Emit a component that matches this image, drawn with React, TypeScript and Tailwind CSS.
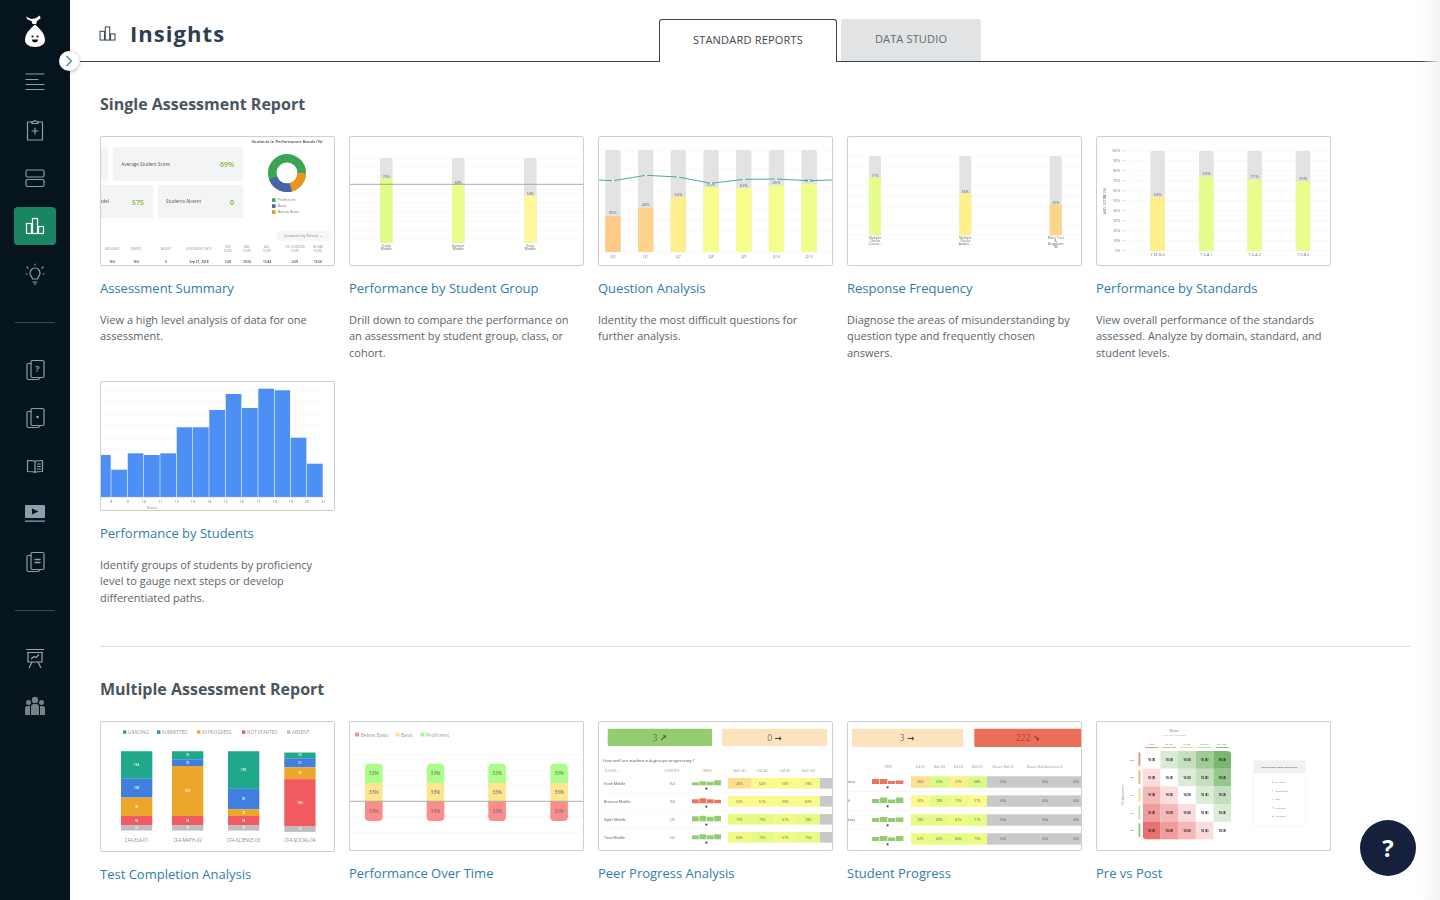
import React from "react";

type P = { children?: React.ReactNode };
const ICON = "#8aa0ae";

function Svg({ children }: P) {
  return (
    <svg viewBox="1 1 233 128" preserveAspectRatio="none" className="block w-full h-full blur-[0.45px]">
      {children}
    </svg>
  );
}

function Grid({ ys, x1 = 1, x2 = 234 }: { ys: number[]; x1?: number; x2?: number }) {
  return (
    <>
      {ys.map((y) => (
        <line key={y} x1={x1} x2={x2} y1={y} y2={y} stroke="#f1f1f1" strokeWidth="0.6" />
      ))}
    </>
  );
}

const T = ({ x, y, s = 4, c = "#666", a = "middle", w = 400, children }: { x: number; y: number; s?: number; c?: string; a?: "start" | "middle" | "end"; w?: number; children: React.ReactNode }) => (
  <text x={x} y={y} fontSize={s} fill={c} textAnchor={a} fontWeight={w}>
    {children}
  </text>
);

const Arrow = ({ c, children }: { c: string; children: React.ReactNode }) => (
  <tspan fontFamily="'DejaVu Sans',sans-serif" fontWeight={700} fill={c}>
    {children}
  </tspan>
);

function Summary() {
  const cols: [number, string[], string][] = [
    [12, ["#ASSIGNED"], "160"], [36, ["GRADED"], "160"], [66, ["ABSENT"], "0"], [99, ["ASSESSMENT DATE"], "Sep 21, 2018"],
    [128, ["MIN.", "SCORE"], "2.00"], [147, ["MAX.", "SCORE"], "20.00"], [167, ["AVG.", "SCORE"], "13.84"], [195, ["STD. DEVIATION", "SCORE"], "4.09"], [218, ["MEDIAN", "SCORE"], "16.00"],
  ];
  const ring = (c: string, start: number, end: number) => (
    <circle cx="187" cy="37" r="14.75" fill="none" stroke={c} strokeWidth="8.5" pathLength="360" strokeDasharray={`${end - start} 360`} strokeDashoffset={-start} transform="rotate(-90 187 37)" />
  );
  return (
    <Svg>
      <rect x="-5" y="11" width="13" height="34" rx="2" fill="#f3f4f6" />
      <rect x="13" y="11" width="130" height="34" rx="2" fill="#f3f4f6" />
      <T x={21.5} y={29.5} s={4.6} a="start" c="#555">Average Student Score</T>
      <T x={134} y={31} s={7} a="end" c="#7cb82f" w={600}>69%</T>
      <rect x="-5" y="49" width="58" height="33" rx="2" fill="#f3f4f6" />
      <T x={0} y={67} s={4.6} a="start" c="#555">adel</T>
      <T x={44} y={68.5} s={7} a="end" c="#7cb82f" w={600}>575</T>
      <rect x="58" y="49" width="85" height="33" rx="2" fill="#f3f4f6" />
      <T x={66} y={67} s={4.6} a="start" c="#555">Students Absent</T>
      <T x={134} y={68.5} s={7} a="end" c="#7cb82f" w={600}>0</T>
      <T x={187} y={7} s={4.2} c="#444" w={600}>Students in Performance Bands (%)</T>
      <circle cx="187" cy="37" r="14.75" fill="none" stroke="#3aa655" strokeWidth="8.5" />
      {ring("#f0931e", 90, 165)}
      {ring("#4a62a8", 165, 250)}
      {[["#3aa655", "Proficient", 64], ["#4a62a8", "Basic", 70], ["#f0931e", "Below Basic", 76]].map(([c, t, y]) => (
        <g key={t as string}>
          <rect x="172" y={(y as number) - 1.7} width="3.6" height="3.6" fill={c as string} />
          <T x={177.5} y={(y as number) + 1.4} s={4} a="start" c="#777">{t}</T>
        </g>
      ))}
      <rect x="177" y="95" width="53" height="10" rx="1" fill="#f5f6f7" />
      <T x={203} y={101.4} s={3.8} c="#888">Compare by School ⌄</T>
      {cols.map(([x, h, v]) => (
        <g key={x}>
          {h.length === 1 ? (
            <T x={x} y={114} s={2.8} c="#999">{h[0]}</T>
          ) : (
            <>
              <T x={x} y={112} s={2.6} c="#999">{h[0]}</T>
              <T x={x} y={116} s={2.6} c="#999">{h[1]}</T>
            </>
          )}
          <T x={x} y={127} s={3.2} c="#444" w={600}>{v}</T>
        </g>
      ))}
    </Svg>
  );
}

const grid10 = [22, 31, 40, 49, 58, 67, 76, 85, 94, 103];

function Group() {
  const bars: [number, number, string, string, string[]][] = [
    [31, 42.3, "#e2fc8a", "75%", ["Trunk", "Middle"]],
    [103, 49, "#e9fc8c", "68%", ["Sumner", "Middle"]],
    [175, 59.7, "#fdf69a", "54%", ["Zinck", "Middle"]],
  ];
  return (
    <Svg>
      <Grid ys={grid10} />
      {bars.map(([x, top, c, l, n]) => (
        <g key={x}>
          <rect x={x} y="22" width="12.5" height="85" rx="1.5" fill="#e3e3e3" />
          <rect x={x} y={top} width="12.5" height={106.7 - top} fill={c} />
          <T x={x + 6.25} y={top - 0.8} s={3.6} c="#666">{l}</T>
          <T x={x + 6.25} y={111} s={3.4}>{n[0]}</T>
          <T x={x + 6.25} y={114} s={3.4}>{n[1]}</T>
        </g>
      ))}
      <line x1="1" x2="234" y1="48.3" y2="48.3" stroke="#8a8a8a" strokeWidth="0.7" />
    </Svg>
  );
}

function Question() {
  const bars: [number, string, string, string][] = [
    [80, "#fdcb87", "35%", "Q3"], [71.7, "#fed48b", "44%", "Q1"], [61.3, "#fdf08c", "54%", "Q7"], [51.3, "#f8fd8c", "63%", "Q8"],
    [52.3, "#f8fd8c", "63%", "Q9"], [49.7, "#f3fe8c", "65%", "Q14"], [48, "#f0fe8c", "66%", "Q15"],
  ];
  const line: [number, number][] = [[1, 44], [15, 44.7], [48, 39.3], [80, 41], [113, 47.3], [146, 43.3], [178, 43], [211, 44.7], [234, 44]];
  return (
    <Svg>
      <Grid ys={[14, 24, 34, 44, 54, 64, 74, 84, 94, 104, 116]} />
      {bars.map(([top, c, l, n], i) => {
        const x = 7.3 + i * 32.7;
        return (
          <g key={n}>
            <rect x={x} y="14" width="15.4" height="102" rx="1.5" fill="#e3e3e3" />
            <rect x={x} y={top} width="15.4" height={116 - top} fill={c} />
            <T x={x + 7.7} y={top - 1.6} s={4} c="#666">{l}</T>
            <T x={x + 7.7} y={122} s={3.8} c="#777">{n}</T>
          </g>
        );
      })}
      <polyline points={line.map((p) => p.join(",")).join(" ")} fill="none" stroke="#2fa890" strokeWidth="0.9" />
      {line.slice(1, -1).map(([x, y]) => (
        <circle key={x} cx={x} cy={y} r="1.1" fill="#fff" />
      ))}
    </Svg>
  );
}

function Response() {
  const bars: [number, number, string, string, string[]][] = [
    [22, 41.7, "#e6fd8c", "71%", ["Multiple", "Choice", "Concre..."]],
    [112.3, 57.3, "#fdf08a", "55%", ["Multiple", "Choice", "Analysi..."]],
    [202.7, 68.7, "#fdd58a", "35%", ["Mem, Tool", "&", "Brogdown", "(B)"]],
  ];
  return (
    <Svg>
      <Grid ys={[20, 30, 40, 50, 60, 70, 80, 90, 99]} />
      {bars.map(([x, top, c, l, n]) => (
        <g key={x}>
          <rect x={x} y="20" width="12" height="79.3" rx="1.5" fill="#e3e3e3" />
          <rect x={x} y={top} width="12" height={99.3 - top} fill={c} />
          <T x={x + 6} y={top - 0.8} s={3.6} c="#666">{l}</T>
          {n.map((t, i) => (
            <T key={t} x={x + 6} y={103 + i * 3} s={3.2}>{t}</T>
          ))}
        </g>
      ))}
    </Svg>
  );
}

function Standards() {
  const bars: [number, number, string, string, string][] = [
    [54.3, 61.3, "#fdf08a", "54%", "7.EE.B.4"], [103, 40.7, "#e6fd8c", "74%", "7.G.A.1"],
    [151.3, 44, "#e8fd8c", "71%", "7.G.A.2"], [199.7, 45.7, "#eafe8c", "70%", "7.G.B.4"],
  ];
  return (
    <Svg>
      <Grid ys={Array.from({ length: 11 }, (_, i) => 14.7 + i * 10)} x1={34} />
      {Array.from({ length: 11 }, (_, i) => (
        <g key={i}>
          <T x={24} y={16 + i * 10} s={3.4} a="end" c="#777">{100 - i * 10}%</T>
          <line x1="26.5" x2="29.5" y1={14.7 + i * 10} y2={14.7 + i * 10} stroke="#999" strokeWidth="0.4" />
        </g>
      ))}
      <text x="10" y="65" fontSize="3.6" fill="#666" textAnchor="middle" transform="rotate(-90 10 65)">AVG. SCORE (%)</text>
      {bars.map(([x, top, c, l, n]) => (
        <g key={n}>
          <rect x={x} y="15" width="14.6" height="99.7" rx="1.5" fill="#e3e3e3" />
          <rect x={x} y={top} width="14.6" height={114.7 - top} fill={c} />
          <T x={x + 7.3} y={top - 1.6} s={4.2} c="#666">{l}</T>
          <T x={x + 7.3} y={120} s={3.8} c="#777">{n}</T>
        </g>
      ))}
    </Svg>
  );
}

function Students() {
  const edges = [1, 11.3, 27.7, 44, 60.3, 76.7, 93, 109.3, 125.7, 142, 158.3, 174.7, 190.7, 207, 223.3];
  const tops = [74, 88.7, 72.3, 74, 72.3, 46.3, 46.3, 29, 13, 27, 7.7, 9.3, 56.7, 82.7];
  return (
    <Svg>
      <Grid ys={[9, 21, 33, 45, 57, 69, 81, 93, 105]} x2={224} />
      {tops.map((t, i) => (
        <rect key={i} x={edges[i]} y={t} width={edges[i + 1] - edges[i] - 0.6} height={116 - t} fill="#4d8ff5" />
      ))}
      <line x1="1" x2="224" y1="116" y2="116" stroke="#aaa" strokeWidth="0.5" />
      {edges.slice(1).map((x, i) => (
        <T key={x} x={x} y={122} s={3.8} c="#777">{i + 8}</T>
      ))}
      <T x={52} y={127.5} s={4} c="#777">Score</T>
    </Svg>
  );
}

function Completion() {
  const colors = ["#1fa98a", "#3f7fe0", "#eca72a", "#f05a60", "#bdbdbd"];
  const legend: [number, string][] = [[23, "GRADING"], [57, "SUBMITTED"], [97, "IN PROGRESS"], [142, "NOT STARTED"], [187, "ABSENT"]];
  const bars: [number, number[], string[], string][] = [
    [21, [30, 57.3, 76, 94.3, 103.3, 108.7], ["154", "108", "90", "58", "16"], "CFA-ELA-01"],
    [72, [30, 38, 44.7, 94.3, 103.3, 108.7], ["25", "70", "318", "58", "16"], "CFA-MATH-02"],
    [128, [30, 67.3, 87.7, 94.3, 103.3, 108.7], ["190", "90", "18", "58", "16"], "CFA-SCIENCE-03"],
    [184.3, [31.3, 37, 46, 57.7, 104.7, 110], ["20", "51", "35", "180", "13"], "CFA-SOCIAL-04"],
  ];
  return (
    <Svg>
      {legend.map(([x, t], i) => (
        <g key={t}>
          <rect x={x} y="9.3" width="3.4" height="3.4" fill={colors[i]} />
          <T x={x + 5} y={12.7} s={4.7} a="start" c="#999">{t}</T>
        </g>
      ))}
      {bars.map(([x, ys, vals, n]) => (
        <g key={n}>
          {vals.map((v, i) => (
            <g key={i}>
              <rect x={x} y={ys[i]} width="31.3" height={ys[i + 1] - ys[i]} fill={colors[i]} />
              <T x={x + 15.6} y={(ys[i] + ys[i + 1]) / 2 + 1} s={3} c="#fff" w={600}>{v}</T>
            </g>
          ))}
          <T x={x + 15.6} y={120.3} s={4.5} c="#888">{n}</T>
        </g>
      ))}
    </Svg>
  );
}

function OverTime() {
  return (
    <Svg>
      <Grid ys={[34, 49.3, 64.7, 95.7, 111.3]} />
      {[[6, "#fc8d8d", "Below Basic"], [46.5, "#fde68f", "Basic"], [71.5, "#acfd8a", "Proficient"]].map(([x, c, t]) => (
        <g key={t as string}>
          <rect x={x as number} y="11.5" width="4" height="4" rx="0.5" fill={c as string} />
          <T x={(x as number) + 5.5} y={15.5} s={5.2} a="start" c="#999">{t}</T>
        </g>
      ))}
      {[16, 77.7, 139.3, 201.3].map((x) => (
        <g key={x}>
          <rect x={x} y="42.7" width="17.6" height="25" rx="4" fill="#acfd8a" />
          <rect x={x} y="92" width="17.6" height="8" rx="4" fill="#fc8d8d" />
          <rect x={x} y="62" width="17.6" height="19" fill="#fde68f" />
          <rect x={x} y="81" width="17.6" height="15" fill="#fc8d8d" />
          {[53.5, 72.8, 92].map((y) => (
            <T key={y} x={x + 8.8} y={y} s={5} c="#666">33%</T>
          ))}
        </g>
      ))}
      <line x1="1" x2="234" y1="80.3" y2="80.3" stroke="#8a8a8a" strokeWidth="0.7" />
    </Svg>
  );
}

const GR = "#96cc70";
const RD = "#ea7560";
function Trend({ x, y, c, hs, w }: { x: number; y: number; c: string; hs: number[]; w: number }) {
  return (
    <>
      {hs.map((h, i) => (
        <rect key={i} x={x + i * (w + 0.6)} y={y - h} width={w} height={h} fill={c} />
      ))}
      <rect x={x + 2 * (w + 0.6) - 1.3} y={y + 2.4} width="1.8" height="1.8" fill="#333" />
    </>
  );
}

function Peer() {
  const rows: [string, string, string, number[], string[], string[]][] = [
    ["Erath Middle", "164", GR, [3, 4, 3.5, 5], ["#fde08d", "#f9f98c", "#fbfb8c", "#f9f98c"], ["45%", "64%", "56%", "59%"]],
    ["Branson Middle", "160", RD, [4, 5, 4, 3.5], ["#fbf98c", "#f9f98c", "#f9f98c", "#f9f98c"], ["52%", "61%", "56%", "60%"]],
    ["Sigler Middle", "120", GR, [5, 5.5, 4.5, 5.5], ["#e6fb85", "#e6fb85", "#f0fb85", "#e6fb85"], ["75%", "73%", "67%", "78%"]],
    ["Tevis Middle", "142", GR, [4, 5, 4, 5], ["#f0fb85", "#e6fb85", "#f0fb85", "#e6fb85"], ["64%", "70%", "67%", "75%"]],
  ];
  const heads: [number, string][] = [[14, "SCHOOL ↕"], [74, "STUDENTS"], [109, "TREND"], [141.5, "Math 041"], [164.5, "ELA 042"], [187.5, "ELA 041"], [210.5, "Math 043"]];
  return (
    <Svg>
      <rect x="9.7" y="7.7" width="104.3" height="17.3" rx="1" fill="#96cc70" />
      <rect x="124" y="7.7" width="105" height="17.3" rx="1" fill="#fde3bd" />
      <T x={62} y={19.5} s={8.6} c="#5c7a50">3 <Arrow c="#3f5f38">↗</Arrow></T>
      <T x={176.5} y={19.5} s={8.6} c="#777">0 <Arrow c="#444">→</Arrow></T>
      <T x={5} y={40.5} s={4.2} a="start" c="#555">How well are student sub-groups progressing ?</T>
      {heads.map(([x, t]) => (
        <T key={t} x={x} y={50.5} s={3} c="#999">{t}</T>
      ))}
      {rows.map(([n, s, c, hs, cs, vs], r) => {
        const y = 62.3 + r * 18;
        return (
          <g key={n}>
            <T x={6} y={y + 1.2} s={3.6} a="start" c="#555">{n}</T>
            <T x={74} y={y + 1.2} s={3.4} c="#777">{s}</T>
            <Trend x={94} y={y + 2} c={c} hs={hs} w={6.8} />
            {cs.map((cc, i) => (
              <g key={i}>
                <rect x={130 + i * 23} y={y - 5.3} width="23" height="10.6" fill={cc} />
                <T x={141.5 + i * 23} y={y + 1.2} s={3.2} c="#666">{vs[i]}</T>
              </g>
            ))}
            <rect x="222" y={y - 5.3} width="13" height="10.6" fill="#c9c9c9" />
            {r < 3 && <line x1="3" x2="234" y1={y + 9} y2={y + 9} stroke="#eee" strokeWidth="0.4" />}
          </g>
        );
      })}
    </Svg>
  );
}

function Progress() {
  const rows: [string, string, number[], string[], string[]][] = [
    ["eson", RD, [5, 5, 3, 3.5], ["#fde08d", "#d9fb85", "#fbf08c", "#d9fb85"], ["46%", "69%", "52%", "68%"]],
    ["h", GR, [4, 5.5, 3.5, 5.5], ["#f9f98c", "#e6fb85", "#f0fb85", "#f9f98c"], ["56%", "78%", "75%", "57%"]],
    ["kney", GR, [4, 5, 4, 4.5], ["#e6fb85", "#e6fb85", "#f0fb85", "#e6fb85"], ["78%", "83%", "81%", "71%"]],
    ["", GR, [4, 5, 3.5, 5], ["#f0fb85", "#e6fb85", "#e6fb85", "#f0fb85"], ["62%", "83%", "84%", "73%"]],
  ];
  const heads: [number, string][] = [[41, "TREND"], [73.5, "ELA 041"], [92.5, "Math 042"], [111.5, "ELA 042"], [130.5, "Math 041"], [156, "Measure Math 43"], [198, "Measure Math Assessment 41"]];
  return (
    <Svg>
      <rect x="5" y="7.7" width="111.3" height="18.3" rx="1" fill="#fde3bd" />
      <rect x="127.300" y="7.7" width="110" height="18.3" rx="1" fill="#ea6f58" />
      <T x={60} y={20} s={8.6} c="#777">3 <Arrow c="#444">→</Arrow></T>
      <T x={181} y={20} s={8.6} c="#a5473a">222 <Arrow c="#7a3a30">↘</Arrow></T>
      {heads.map(([x, t]) => (
        <T key={t} x={x} y={47} s={2.6} c="#999">{t}</T>
      ))}
      {rows.map(([n, c, hs, cs, vs], r) => {
        const y = 61 + r * 19;
        return (
          <g key={r}>
            <T x={1} y={y + 1} s={3.2} a="start" c="#555">{n}</T>
            <Trend x={25} y={y + 2} c={c} hs={hs} w={7.4} />
            {cs.map((cc, i) => (
              <g key={i}>
                <rect x={64 + i * 19} y={y - 5.7} width="19" height="11.4" fill={cc} />
                <T x={73.5 + i * 19} y={y + 1.100} s={3.2} c="#666">{vs[i]}</T>
              </g>
            ))}
            <rect x="140" y={y - 5.7} width="96" height="11.4" fill="#c9c9c9" />
            {[156, 198, 229].map((x) => (
              <T key={x} x={x} y={y + 1.100} s={3} c="#666">N/A</T>
            ))}
            {r < 3 && <line x1="1" x2="234" y1={y + 9.5} y2={y + 9.5} stroke="#eee" strokeWidth="0.4" />}
          </g>
        );
      })}
    </Svg>
  );
}

function PrePost() {
  const m = [
    ["#ffffff", "#d9ead4", "#c6e0bf", "#9fcb96", "#79b771"],
    ["#fbdcdc", "#ffffff", "#dcecd6", "#c5dfbe", "#97c78d"],
    ["#f5b8b8", "#fcdddd", "#ffffff", "#dcecd6", "#c5dfbe"],
    ["#f09c9c", "#f5b8b8", "#fbdcdc", "#ffffff", "#dcecd6"],
    ["#ea7070", "#f09c9c", "#f5b8b8", "#fbdcdc", "#ffffff"],
  ];
  const bands = ["#e88a8a", "#eeb26b", "#f0de88", "#bcdcb0", "#8cc084"];
  return (
    <Svg>
      <defs>
        <clipPath id="heat"><rect x="46.7" y="30" width="88.500" height="88.500" rx="4" /></clipPath>
      </defs>
      <T x={78} y={11} s={3} c="#777">Matrix</T>
      <T x={78} y={15} s={2.2} c="#aaa">Pre vs Post Assessment</T>
      {bands.map((c, i) => (
        <g key={c}>
          <T x={55.5 + i * 17.7} y={24} s={2.4} c="#777">{i * 20}-{(i + 1) * 20}%</T>
          <rect x={49 + i * 17.7} y="26" width="13" height="1" fill={c} />
          <rect x="42.5" y={31.5 + i * 17.7} width="1.8" height="13.5" fill={c} />
          <T x={36} y={39.5 + i * 17.7} s={2.4} c="#777">{100 - i * 20}%</T>
        </g>
      ))}
      <text x="28" y="74" fontSize="2.6" fill="#888" textAnchor="middle" transform="rotate(-90 28 74)">Pre Assessment</text>
      <g clipPath="url(#heat)">
        {m.map((row, r) =>
          row.map((c, i) => (
            <g key={`${r}-${i}`}>
              <rect x={46.7 + i * 17.7} y={30 + r * 17.7} width="17.8" height="17.8" fill={c} />
              <T x={55.6 + i * 17.7} y={40 + r * 17.7} s={2.8} c="#222" w={700}>16 (8)</T>
            </g>
          ))
        )}
      </g>
      <rect x="157.3" y="39.7" width="52.4" height="66" rx="2" fill="#fff" stroke="#eee" strokeWidth="0.6" />
      <path d="M157.3 52.3V41.7a2 2 0 0 1 2-2h48.4a2 2 0 0 1 2 2V52.3Z" fill="#f1f1f1" />
      <T x={183.5} y={47} s={2.4} c="#666" w={600}>Performance band comparison</T>
      {bands.map((c, i) => (
        <g key={c}>
          <circle cx="176.5" cy={61 + i * 8.6} r="0.7" fill={c} />
          <T x={179} y={62 + i * 8.6} s={2.4} a="start" c="#888">{["Far Below", "Below Basic", "Basic", "Proficient", "Advanced"][i]}</T>
        </g>
      ))}
    </Svg>
  );
}

type Card = { title: string; desc?: string; chart: React.ReactNode; tall?: boolean };

const single: Card[] = [
  { title: "Assessment Summary", desc: "View a high level analysis of data for one assessment.", chart: <Summary /> },
  { title: "Performance by Student Group", desc: "Drill down to compare the performance on an assessment by student group, class, or cohort.", chart: <Group /> },
  { title: "Question Analysis", desc: "Identity the most difficult questions for further analysis.", chart: <Question /> },
  { title: "Response Frequency", desc: "Diagnose the areas of misunderstanding by question type and frequently chosen answers.", chart: <Response /> },
  { title: "Performance by Standards", desc: "View overall performance of the standards assessed. Analyze by domain, standard, and student levels.", chart: <Standards /> },
  { title: "Performance by Students", desc: "Identify groups of students by proficiency level to gauge next steps or develop differentiated paths.", chart: <Students /> },
];

const multiple: Card[] = [
  { title: "Test Completion Analysis", chart: <Completion />, tall: true },
  { title: "Performance Over Time", chart: <OverTime /> },
  { title: "Peer Progress Analysis", chart: <Peer /> },
  { title: "Student Progress", chart: <Progress /> },
  { title: "Pre vs Post", chart: <PrePost /> },
];

function ReportCard({ card }: { card: Card }) {
  return (
    <div className="w-[235px]">
      <div className={`${card.tall ? "h-[131px]" : "h-[130px]"} box-border overflow-hidden rounded-[2px] border border-[#cfcfcf] bg-white`}>{card.chart}</div>
      <h3 className="mt-[13px] h-[19px] text-[13px] leading-[19px] font-normal text-[#2f7dab]">{card.title}</h3>
      {card.desc && <p className="mt-[13.75px] w-[228px] text-[11px] leading-[16.5px] text-[#59636d]">{card.desc}</p>}
    </div>
  );
}

function Section({ title, cards }: { title: string; cards: Card[] }) {
  return (
    <section>
      <h2 className="h-6 text-base leading-6 font-bold text-[#4a5560]">{title}</h2>
      <div className="mt-5 grid grid-cols-[repeat(5,235px)] gap-x-[14px] gap-y-[19.75px]">
        {cards.map((c) => (
          <ReportCard key={c.title} card={c} />
        ))}
      </div>
    </section>
  );
}

function Ic({ children }: P) {
  return (
    <svg width="24" height="24" viewBox="0 0 24 24" fill="none" stroke={ICON} strokeWidth="1.2" strokeLinecap="round" strokeLinejoin="round">
      {children}
    </svg>
  );
}

function BarsIcon({ color, size = 24 }: { color: string; size?: number }) {
  return (
    <svg width={size} height={size} viewBox="0 0 24 24" fill="none" stroke={color} strokeWidth="1.2">
      <rect x="3.5" y="9.5" width="5" height="10" />
      <rect x="9.5" y="4.5" width="5" height="15" />
      <rect x="15.5" y="12.5" width="5" height="7" />
    </svg>
  );
}

const nav: React.ReactNode[] = [
  <Ic><path d="M3 4h18M3 9.5h12M3 14.5h18M3 19.5h18" /></Ic>,
  <Ic><path d="M9 4H4.5v18h15V4H15" /><path d="M9 5.5V3.5h2a1 1 0 0 1 2 0h2v2Z" /><path d="M12 10v6M9 13h6" /></Ic>,
  <Ic><rect x="3" y="4" width="18" height="7" rx="1.5" /><rect x="3" y="13.5" width="18" height="7" rx="1.5" /></Ic>,
  <div className="flex h-[38px] w-[42px] items-center justify-center rounded-[4px] bg-[#1b8563]"><BarsIcon color="#ffffff" /></div>,
  <Ic><path d="M9.5 17c0-2-2.5-3-2.5-6a5 5 0 0 1 10 0c0 3-2.500 4-2.500 6Z" /><path d="M10 20h4M11 22h2M12 2v1M4 5l1 1M20 5l-1 1M3 12h1M20 12h1" /></Ic>,
  "divider",
  <Ic><rect x="8" y="2.500" width="13" height="17" rx="1.500" /><path d="M8 5.500H5.500A1.500 1.500 0 0 0 4 7v13a1.500 1.500 0 0 0 1.500 1.500H15a1.500 1.500 0 0 0 1.500-1.500" /><text x="14.500" y="14" fontSize="9" fill={ICON} stroke="none" textAnchor="middle" fontWeight="700">?</text></Ic>,
  <Ic><rect x="8" y="2.500" width="13" height="17" rx="1.500" /><path d="M8 5.500H5.500A1.500 1.500 0 0 0 4 7v13a1.500 1.500 0 0 0 1.500 1.500H15a1.500 1.500 0 0 0 1.500-1.500" /><circle cx="14.500" cy="11" r="1.300" fill={ICON} stroke="none" /></Ic>,
  <Ic><path d="M12 7.500C10.500 6.500 7 6.500 4.500 6.500v11c2.500 0 5.500 0 7.500 1 2-1 5-1 7.500-1v-11c-2.500 0-6 0-7.500 1Zm0 0v11" /><path d="M14.500 10h3M14.500 12.500h3M14.500 15h3" /></Ic>,
  <svg width="24" height="24" viewBox="0 0 24 24"><rect x="2" y="3" width="20" height="13" rx="1" fill={ICON} /><path d="M9 6.500l6.500 3-6.500 3Z" fill="#05141d" /><rect x="2" y="18.500" width="20" height="1.300" fill={ICON} /></svg>,
  <Ic><rect x="8" y="2.500" width="13" height="17" rx="1.500" /><path d="M8 5.500H5.500A1.500 1.500 0 0 0 4 7v13a1.500 1.500 0 0 0 1.500 1.500H15a1.500 1.500 0 0 0 1.500-1.500" /><path d="M12 9.500h5M12 12.500h5" strokeWidth="1.500" /></Ic>,
  "divider",
  <svg width="24" height="24" viewBox="0 0 24 24" fill="none" stroke="#9aa5ab" strokeWidth="1.200"><path d="M3 3.500h18M4 6.500h16M5 6.500V16h14V6.500" /><path d="M8 13l3-2.500 2 1 3-3" /><path d="M9 16l-3 6M15 16l3 6" /></svg>,
  <svg width="24" height="24" viewBox="0 0 24 24" fill="#7b8085"><circle cx="12" cy="6" r="3.200" /><circle cx="5.500" cy="8.500" r="2.500" /><circle cx="18.500" cy="8.500" r="2.500" /><path d="M8 21v-8a3 3 0 0 1 3-3h2a3 3 0 0 1 3 3v8Z" /><path d="M2 21v-6.500A2.500 2.500 0 0 1 4.500 12H7v9ZM22 21v-6.500a2.500 2.500 0 0 0-2.500-2.500H17v9Z" /></svg>,
];

function Sidebar() {
  return (
    <aside className="flex h-full w-[70px] shrink-0 flex-col items-center bg-[#05141d]">
      <div className="flex h-[58px] w-full justify-center pt-[15px]">
        <svg width="20" height="32" viewBox="0 0 20 32">
          <path d="M10 9.500C6.500 12.500 0 18 0 25c0 4 4 7 10 7s10-3 10-7c0-7-6.500-12.500-10-15.500Z" fill="#fff" />
          <path d="M1 1.500l5 2.500 4-.5 5-3 .5 3-3.500 2.500-.8 3H7.500L6.500 6 2.500 4.500Z" fill="#fff" />
          <circle cx="7.500" cy="21.500" r="1.100" fill="#05141d" />
          <circle cx="12.500" cy="21.500" r="1.100" fill="#05141d" />
          <path d="M6.800 24.500h6.400c-.4 2-1.700 2.800-3.200 2.800s-2.800-.8-3.200-2.800Z" fill="#05141d" />
        </svg>
      </div>
      {nav.map((item, i) => (
        <div key={i} className="flex h-12 w-full shrink-0 items-center justify-center">
          {item === "divider" ? <div className="h-px w-10 bg-[#3c4a52]" /> : item}
        </div>
      ))}
    </aside>
  );
}

function Header() {
  return (
    <header className="ml-[10px] flex h-[62px] items-end border-b border-[#39444c]">
      <div className="flex h-full w-[579px] items-center pt-[6px] pl-5">
        <div className="-ml-[3px]"><BarsIcon color="#3c4a55" size={21} /></div>
        <h1 className="ml-3 text-[22px] font-bold tracking-[1.05px] text-[#2e3e4e]">Insights</h1>
      </div>
      <div className="-mb-px flex h-[43px] items-end gap-1">
        <button className="box-border flex h-[43px] w-[178px] items-center justify-center rounded-t-[3px] border border-b-0 border-[#39444c] bg-white pb-[2px] text-[11px] font-medium tracking-[0.2px] text-[#3a4550]">STANDARD REPORTS</button>
        <button className="mb-px flex h-[42px] w-[140px] items-center justify-center rounded-t-[3px] bg-[#e2e3e4] pb-[2px] text-[11px] font-medium tracking-[0.15px] text-[#5f6a72]">DATA STUDIO</button>
      </div>
    </header>
  );
}

export default function App() {
  return (
    <div className="relative flex h-screen overflow-hidden bg-white font-['Open_Sans',sans-serif]">
      <Sidebar />
      <div className="min-w-0 flex-1">
        <Header />
        <main className="pt-[30px] pr-[30px] pl-[30px]">
          <Section title="Single Assessment Report" cards={single} />
          <hr className="mt-10 mb-[30px] border-0 border-t border-[#d9d9d9]" />
          <Section title="Multiple Assessment Report" cards={multiple} />
        </main>
      </div>
      <div className="pointer-events-none absolute top-0 right-0 bottom-0 w-5 bg-linear-to-r from-transparent to-[#f3f3f3]" />
      <button className="absolute right-[24px] bottom-6 flex h-14 w-14 items-center justify-center rounded-full bg-[#15203a] text-2xl font-bold text-white">?</button>
      <button className="absolute top-[51px] left-[59px] flex h-5 w-5 items-center justify-center rounded-full bg-white shadow-[0_1px_4px_rgba(0,0,0,0.3)]">
        <svg width="12" height="12" viewBox="0 0 12 12" fill="none" stroke="#2c8a6c" strokeWidth="1.1"><path d="M3.500 1l5 5-5 5" /></svg>
      </button>
    </div>
  );
}
